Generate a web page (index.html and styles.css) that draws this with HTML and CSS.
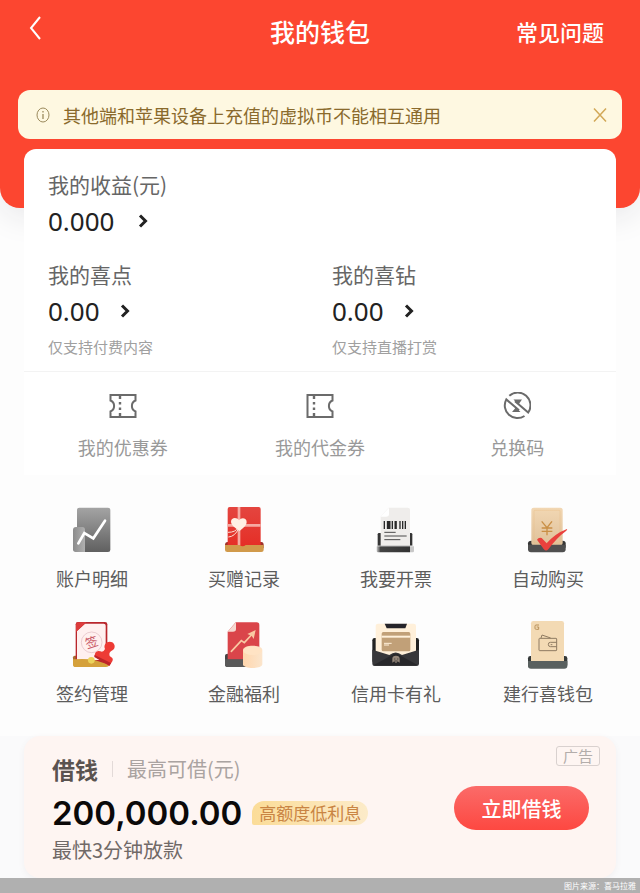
FILE: index.html
```html
<!DOCTYPE html>
<html lang="zh-CN">
<head>
<meta charset="utf-8">
<meta name="viewport" content="width=device-width, initial-scale=1">
<title>我的钱包</title>
<link rel="stylesheet" href="styles.css">
</head>
<body>
<header class="top">
  <nav class="nav">
    <button class="back" type="button" aria-label="返回">
      <svg width="14" height="26" viewBox="0 0 14 26"><path d="M12 2L3 13L12 24" fill="none" stroke="#fff" stroke-width="2"/></svg>
    </button>
    <h1 class="title">我的钱包</h1>
    <a class="faq" href="#">常见问题</a>
  </nav>
</header>

<main class="main">
  <section class="notice">
    <svg class="notice-icon" width="14" height="16" viewBox="0 0 14 16"><ellipse cx="7" cy="8" rx="6" ry="7" fill="none" stroke="#9b8a5c"/><path d="M7 7V12M7 4V5.500" stroke="#9b8a5c" stroke-width="1.300"/></svg>
    <p class="notice-text">其他端和苹果设备上充值的虚拟币不能相互通用</p>
    <button class="close" type="button" aria-label="关闭">
      <svg width="16" height="16" viewBox="0 0 16 16"><path d="M2 1.500L14 14.500M14 1.500L2 14.500" stroke="#d2a858" stroke-width="1.500"/></svg>
    </button>
  </section>

  <section class="card">
    <div class="balances">
      <div class="balance wide">
        <span class="label">我的收益(元)</span>
        <a class="amount" href="#">0.000 <svg class="chev far" width="10" height="14" viewBox="0 0 10 14"><path d="M2 1.500L7.500 7L2 12.500" fill="none" stroke="#222" stroke-width="3"/></svg></a>
      </div>
      <div class="balance">
        <span class="label">我的喜点</span>
        <a class="amount" href="#">0.00 <svg class="chev" width="10" height="14" viewBox="0 0 10 14"><path d="M2 1.500L7.500 7L2 12.500" fill="none" stroke="#222" stroke-width="3"/></svg></a>
        <span class="hint">仅支持付费内容</span>
      </div>
      <div class="balance">
        <span class="label">我的喜钻</span>
        <a class="amount" href="#">0.00 <svg class="chev" width="10" height="14" viewBox="0 0 10 14"><path d="M2 1.500L7.500 7L2 12.500" fill="none" stroke="#222" stroke-width="3"/></svg></a>
        <span class="hint">仅支持直播打赏</span>
      </div>
    </div>
    <div class="tickets">
      <a class="ticket" href="#">
        <svg width="28" height="28" viewBox="0 0 28 28" fill="none" stroke="#6b6b6b" stroke-width="2"><path d="M1.500 3H26.500V8.500A6 6 0 0 0 26.500 19.500V25H1.500V19.500A6 6 0 0 0 1.500 8.500Z"/><path d="M11 4V7M11 10V12.500M11 15.500V18M11 21V24" stroke-width="2.400"/></svg>
        <span>我的优惠券</span>
      </a>
      <a class="ticket" href="#">
        <svg width="28" height="28" viewBox="0 0 28 28" fill="none" stroke="#6b6b6b" stroke-width="2"><path d="M1.500 3H26.500V8.500A6 6 0 0 0 26.500 19.500V25H1.500Z"/><path d="M8 4V7M8 10V12.500M8 15.500V18M8 21V24" stroke-width="2.400"/></svg>
        <span>我的代金券</span>
      </a>
      <a class="ticket" href="#">
        <svg width="28" height="28" viewBox="0 0 28 28" fill="none" stroke="#6b6b6b" stroke-width="2"><path d="M6.300 3.800A12.700 12.700 0 0 1 25.200 20.500L12 9.200"/><path d="M21.500 24A12.700 12.700 0 0 1 3.300 7.400L16 18.300"/><path d="M10.500 7.500H19L16.200 11.500V13L14 11.200ZM9 20H17.500L14 16.500L12 14.800V16.500Z" fill="#6b6b6b" stroke="none"/></svg>
        <span>兑换码</span>
      </a>
    </div>
  </section>

  <section class="services">
    <a class="service" href="#">
      <svg viewBox="72 27 168 156">
        <defs><linearGradient id="grey" x2="0" y2="1"><stop stop-color="#a4a4a4"/><stop offset="1" stop-color="#606060"/></linearGradient><linearGradient id="greyTab"><stop stop-color="#8c8c8c"/><stop offset="1" stop-color="#b0b0b0"/></linearGradient></defs>
        <rect x="111" y="38" width="100" height="133" rx="7" fill="url(#grey)"/>
        <path d="M99 105Q99 96 108 96H127Q135 96 135 105V171H107Q99 171 99 163Z" fill="url(#greyTab)"/>
        <path d="M115 145L133 114L160 130L195 77" fill="none" stroke="#fff" stroke-width="8" stroke-linecap="round"/>
      </svg>
      <span>账户明细</span>
    </a>
    <a class="service" href="#">
      <svg viewBox="528 27 168 156">
        <defs><linearGradient id="red" x2="0" y2="1"><stop stop-color="#e4453f"/><stop offset="1" stop-color="#e52e26"/></linearGradient></defs>
        <path d="M555 150Q555 141 563 141H664Q671 141 671 150V160H555Z" fill="#9e3229"/>
        <rect x="563" y="36" width="99" height="120" rx="6" fill="url(#red)"/>
        <path d="M597 36V151M563 91H662" stroke="#f6aaa2" stroke-width="8"/>
        <path d="M594 98Q587 112 564 112M596 100Q585 125 565 126" fill="none" stroke="#fae0d5" stroke-width="3"/>
        <path d="M599 108C587 99 573 91 573 80C573 67 591 66 597 76C603 66 621 68 620 82C619 93 608 100 599 108Z" fill="#fff0e4"/>
        <path d="M555 150H599Q608 158 617 150H671V165Q671 171 664 171H562Q555 171 555 165Z" fill="#d19a4b"/>
      </svg>
      <span>买赠记录</span>
    </a>
    <a class="service" href="#">
      <svg viewBox="114 27 168 156">
        <defs><linearGradient id="roller"><stop stop-color="#c4c4c4"/><stop offset=".1" stop-color="#444"/><stop offset=".88" stop-color="#333"/><stop offset=".9" stop-color="#c8c8c8"/></linearGradient></defs>
        <rect x="143" y="114" width="12" height="43" rx="4" fill="#353535"/><rect x="235" y="114" width="12" height="43" rx="4" fill="#353535"/>
        <path d="M152 65L176 38H233Q240 38 240 45V153H152Z" fill="#efedeb"/><path d="M152 65H168Q177 65 177 57V38Z" fill="#fff"/>
        <path d="M163 78V102M187 78V102M226 78V102" stroke="#292929" stroke-width="4"/><path d="M176 78V102" stroke="#292929" stroke-width="11"/><path d="M197 78V102" stroke="#292929" stroke-width="7"/><path d="M210 78V102M218 78V102" stroke="#292929" stroke-width="4"/>
        <path d="M163 112H197M163 123H230M163 134H211" stroke="#4b4b4b" stroke-width="3"/>
        <rect x="140" y="152" width="112" height="20" rx="4" fill="url(#roller)"/><path d="M142 153H250" stroke="#f5f5f5" stroke-width="2"/>
      </svg>
      <span>我要开票</span>
    </a>
    <a class="service" href="#">
      <svg viewBox="570 27 168 156">
        <defs><linearGradient id="gold" x1="0" y1="0" x2="0" y2="1"><stop stop-color="#f2d7b3"/><stop offset="1" stop-color="#dfc19a"/></linearGradient></defs>
        <path d="M594 145Q594 137 604 137H698Q707 137 707 145V158H594Z" fill="#363636"/>
        <rect x="604" y="38" width="94" height="113" rx="7" fill="url(#gold)"/><rect x="612" y="46" width="78" height="98" rx="2" fill="none" stroke="#e8b878"/>
        <path d="M635 79L651 98L666 79M651 98V121M635 99H667M635 109H667" fill="none" stroke="#c98f45" stroke-width="4"/>
        <path d="M594 149H707V163Q707 172 698 172H603Q594 172 594 163Z" fill="#4f4f4f"/>
        <path d="M621 134Q626 126 635 129L650 145Q676 115 711 102Q713 102 709 107Q679 129 655 163Q648 171 641 162Z" fill="#e9413d"/>
      </svg>
      <span>自动购买</span>
    </a>
    <a class="service" href="#">
      <svg viewBox="72 27 168 156">
        <rect x="99" y="137" width="107" height="30" rx="5" fill="#a86d30"/>
        <rect x="107" y="36" width="95" height="126" rx="7" fill="#b9262c"/><path d="M111 63L135 41H191Q197 41 197 47V150H111Z" fill="#fff0ef"/><path d="M108 66V43Q108 37 115 37H139Z" fill="#dc3c3c"/>
        <circle cx="155" cy="97" r="31" fill="none" stroke="#dfbabf" stroke-width="2"/>
        <text class="seal" x="155" y="111" text-anchor="middle" transform="rotate(-18 155 97)">签</text>
        <path d="M99 148Q145 145 166 151Q185 158 208 164Q206 171 198 171H107Q99 171 99 164Z" fill="#d5a13b"/><circle cx="154" cy="151" r="10" fill="#ecd35c"/>
        <path d="M166 128Q172 120 181 124Q190 128 195 117C190 105 198 95 209 95C221 95 227 106 223 115C220 123 210 122 208 132Q207 140 214 142Q221 146 217 154L208 168L163 139Z" fill="#ed3b35"/><path d="M164 135L213 159L208 167L163 141Z" fill="#bd2528"/>
      </svg>
      <span>签约管理</span>
    </a>
    <a class="service" href="#">
      <svg viewBox="528 27 168 156">
        <defs><linearGradient id="coin"><stop stop-color="#ffd6ad"/><stop offset="1" stop-color="#fbe5cc"/></linearGradient></defs>
        <path d="M555 138Q555 131 564 131H650V171H562Q555 171 555 163Z" fill="#454545"/>
        <path d="M563 65L587 37H650Q658 37 658 45V149H563Z" fill="#da454a"/><path d="M563 65H579Q588 65 588 57V37Z" fill="#f6d9d1"/>
        <path d="M574 124L604 92L613 98L637 72" fill="none" stroke="#f9c9a3" stroke-width="5" stroke-linecap="round"/><path d="M622 72L647 60L641 87L635 77Z" fill="#f9c9a3"/>
        <path d="M555 148H612V171H562Q555 171 555 163Z" fill="#595959"/>
        <path d="M609 120C609 103 667 103 667 120V163C667 178 609 178 609 163Z" fill="url(#coin)"/><ellipse cx="638" cy="122" rx="28" ry="13" fill="#ffe3c4"/>
      </svg>
      <span>金融福利</span>
    </a>
    <a class="service" href="#">
      <svg viewBox="114 27 168 156">
        <rect x="127" y="84" width="140" height="76" rx="7" fill="#222"/>
        <path d="M137 48Q137 41 144 41H251Q258 41 258 48V125L197 145L137 125Z" fill="#fff0da"/><path d="M164 41H231L226 55H170Z" fill="#25242a"/>
        <rect x="155" y="66" width="86" height="58" rx="5" fill="#c1a078"/><path d="M155 80H241" stroke="#fff0da" stroke-width="6"/><path d="M162 100H185M162 105H177" stroke="#fff0da" stroke-width="3"/>
        <path d="M127 119L178 135Q197 120 216 135L267 119V162Q267 168 259 168H134Q127 168 127 162Z" fill="#37373a"/><path d="M130 166L183 137Q197 124 212 137L264 166Z" fill="#28282b"/>
        <path d="M187 158V146Q187 137 198 137Q209 137 209 146V158L203 154L198 160L193 154Z" fill="#95877a"/><path d="M192 147H196M201 147H205M194 152Q198 155 202 152" fill="none" stroke="#2d2d2d" stroke-width="2"/>
      </svg>
      <span>信用卡有礼</span>
    </a>
    <a class="service" href="#">
      <svg viewBox="570 27 168 156">
        <rect x="594" y="138" width="118" height="34" rx="7" fill="#353939"/>
        <rect x="603" y="33" width="99" height="130" rx="7" fill="#f3dab4"/>
        <path d="M627 45H618Q615 45 615 49V55Q615 58 619 58H626V51H620" fill="none" stroke="#b79059" stroke-width="3"/>
        <rect x="627" y="85" width="53" height="37" rx="2" fill="none" stroke="#8f7b62" stroke-width="3"/><path d="M633 84L636 75L662 84M680 97H661Q655 97 655 103Q655 110 661 110H680M662 104H667" fill="none" stroke="#8f7b62" stroke-width="3"/>
        <path d="M594 153H712V168Q712 176 703 176H603Q594 176 594 168Z" fill="#59605f"/>
      </svg>
      <span>建行喜钱包</span>
    </a>
  </section>
</main>

<section class="promo">
  <div class="loan">
    <div class="loan-info">
      <div class="loan-head"><h2>借钱</h2><span class="loan-sub">最高可借(元)</span></div>
      <div class="loan-sum"><strong>200,000.00</strong><span class="badge">高额度低利息</span></div>
      <p class="loan-note">最快3分钟放款</p>
    </div>
    <div class="loan-side">
      <span class="ad-tag">广告</span>
      <button class="borrow" type="button">立即借钱</button>
    </div>
  </div>
</section>
<footer class="source">图片来源：喜马拉雅</footer>
</body>
</html>
```
FILE: styles.css
```css
* { box-sizing: border-box; }

body {
  margin: 0;
  background: #fdfdfd;
  color: #555;
  font-family: "Noto Sans CJK SC", sans-serif;
}

h1, h2, p { margin: 0; }
a { color: inherit; text-decoration: none; }
button { border: 0; padding: 0; background: none; font: inherit; cursor: pointer; }
svg { display: block; flex: none; }

.top {
  padding-bottom: 146px;
  background: #fc4630;
  border-radius: 0 0 20px 20px;
  box-shadow: 0 8px 32px #e8e8ea;
  color: #fff;
}
.nav {
  display: grid;
  grid-template-columns: 1fr auto 1fr;
  align-items: center;
  height: 62px;
  padding: 0 28px;
}
.back { justify-self: start; padding-bottom: 6px; }
.title { font-size: 25px; line-height: 36px; font-weight: 500; }
.faq {
  justify-self: end;
  padding-right: 8px;
  font-size: 22px;
  line-height: 36px;
  font-weight: 500;
}

.main { margin-top: -118px; }

.notice {
  display: flex;
  align-items: center;
  min-height: 49px;
  margin: 0 18px 10px;
  padding: 0 14px 0 18px;
  border-radius: 12px;
  background: #fef8e1;
  color: #8a6a2c;
}
.notice-text { flex: 1; margin-left: 13px; font-size: 18px; line-height: 26px; }

.card {
  margin: 0 24px;
  border-radius: 12px 12px 0 0;
  background: #fff;
}
.balances {
  display: grid;
  grid-template-columns: 1fr 1fr;
  row-gap: 20px;
  padding: 20px 0 14px 24px;
  border-bottom: 1px solid #f3f3f3;
}
.balance { display: flex; flex-direction: column; align-items: flex-start; }
.wide { grid-column: 1 / -1; }
.label { font-size: 21px; line-height: 30px; color: #666; }
.amount {
  display: flex;
  align-items: center;
  gap: 20px;
  margin-top: 4px;
  font-family: "Noto Sans", sans-serif;
  font-size: 26px;
  line-height: 36px;
  color: #222;
}
.far { margin-left: 4px; }
.hint { margin-top: 8px; font-size: 15px; line-height: 20px; color: #a0a0a0; }

.tickets { display: grid; grid-template-columns: repeat(3, 1fr); padding: 20px 0 15px; }
.ticket {
  display: flex;
  flex-direction: column;
  align-items: center;
  gap: 14px;
  font-size: 18px;
  line-height: 26px;
  color: #999;
}

.services {
  display: grid;
  grid-template-columns: repeat(4, 1fr);
  row-gap: 28px;
  padding: 29px 16px 30px;
}
.service {
  display: flex;
  flex-direction: column;
  align-items: center;
  gap: 9px;
  font-size: 18px;
  line-height: 26px;
  color: #5c5c5c;
}
.service svg { width: 56px; height: 52px; }
.seal { font-size: 38px; fill: #c75664; }

.promo { padding: 0 24px; background: #fafafb; }
.loan {
  display: flex;
  justify-content: space-between;
  min-height: 141px;
  padding: 10px 16px 14px 28px;
  border-radius: 16px;
  background: #fef5f2;
  box-shadow: 0 2px 6px #f2f0f1;
}
.loan-head { display: flex; align-items: center; margin-top: 8px; line-height: 30px; }
.loan-head h2 { font-size: 23px; font-weight: 700; color: #5a5350; }
.loan-sub { margin-left: 14px; font-size: 20px; color: #aaa3a1; }
.loan-sub::before {
  content: "";
  display: inline-block;
  height: 16px;
  margin-right: 14px;
  border-left: 1px solid #e3dad8;
}
.loan-sum { display: flex; align-items: center; gap: 10px; margin-top: 8px; }
.loan-sum strong {
  font-family: Inter, sans-serif;
  font-size: 33px;
  line-height: 42px;
  font-weight: 600;
  color: #0b0909;
}
.badge {
  padding: 0 7px;
  border-radius: 12px 12px 12px 2px;
  background: linear-gradient(90deg, #fbdc98, #fcebc9);
  font-size: 17px;
  line-height: 24px;
  color: #c98443;
}
.loan-note { margin-top: 2px; font-size: 20px; line-height: 28px; color: #706967; }
.loan-side { display: flex; flex-direction: column; align-items: flex-end; gap: 20px; }
.ad-tag {
  padding: 0 6px;
  border: 1px solid #d9d1cf;
  border-radius: 3px;
  font-size: 15px;
  line-height: 18px;
  color: #b3adab;
}
.borrow {
  width: 135px;
  height: 44px;
  margin-right: 11px;
  border-radius: 22px;
  background: linear-gradient(#fb6b69, #fd4841);
  font-size: 20px;
  font-weight: 500;
  color: #fff;
}

.source {
  padding-right: 4px;
  background: #b0b0b0;
  font-size: 8px;
  line-height: 16px;
  text-align: right;
  color: #fff;
}
```
